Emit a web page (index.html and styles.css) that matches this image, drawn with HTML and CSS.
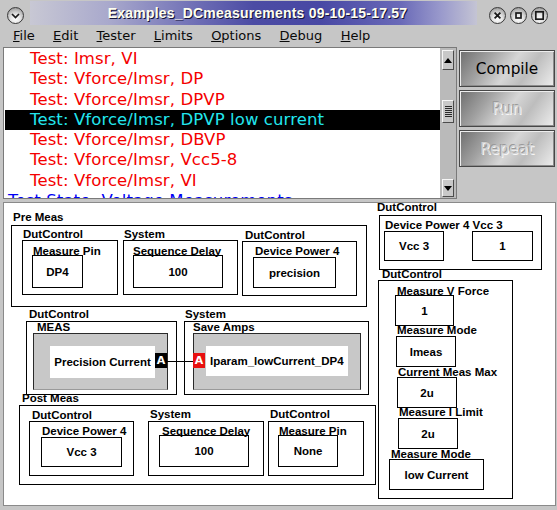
FILE: index.html
```html
<!DOCTYPE html>
<html>
<head>
<meta charset="utf-8">
<link rel="stylesheet" href="styles.css">
</head>
<body>
<div class="titlebar">
  <span class="wbtn wbtn-menu"><svg width="15" height="15" viewBox="0 0 15 15"><polyline points="4,6 7.5,9.5 11,6" fill="none" stroke="#1a1a1a" stroke-width="1.7"/></svg></span>
  <div class="band"><span class="title">Examples_DCmeasurements 09-10-15-17.57</span></div>
  <div class="wctrls">
    <span class="wbtn"><svg width="15" height="15" viewBox="0 0 15 15"><path d="M4.6 4.6 L10.4 10.4 M10.4 4.6 L4.6 10.4" stroke="#1a1a1a" stroke-width="1.8"/></svg></span>
    <span class="wbtn"><svg width="15" height="15" viewBox="0 0 15 15"><rect x="5" y="5" width="5" height="5" fill="none" stroke="#1a1a1a" stroke-width="1.7"/></svg></span>
    <span class="wbtn"><svg width="15" height="15" viewBox="0 0 15 15"><rect x="3.8" y="3.8" width="7.4" height="7.4" fill="none" stroke="#1a1a1a" stroke-width="1.7"/></svg></span>
  </div>
</div>
<div class="menubar">
  <span class="mi"><u>F</u>ile</span>
  <span class="mi"><u>E</u>dit</span>
  <span class="mi"><u>T</u>ester</span>
  <span class="mi"><u>L</u>imits</span>
  <span class="mi"><u>O</u>ptions</span>
  <span class="mi"><u>D</u>ebug</span>
  <span class="mi"><u>H</u>elp</span>
</div>
<div class="top">
  <div class="listframe">
    <div class="list">
      <div class="row red">Test: Imsr, VI</div>
      <div class="row red">Test: Vforce/Imsr, DP</div>
      <div class="row red">Test: Vforce/Imsr, DPVP</div>
      <div class="row sel">Test: Vforce/Imsr, DPVP low current</div>
      <div class="row red">Test: Vforce/Imsr, DBVP</div>
      <div class="row red">Test: Vforce/Imsr, Vcc5-8</div>
      <div class="row red">Test: Vforce/Imsr, VI</div>
      <div class="row blue">Test State: Voltage Measurements</div>
    </div>
    <div class="scrollbar">
      <div class="sbtn up"><span class="tri-up"></span></div>
      <div class="sbtn thumb"><span class="grip"></span></div>
      <div class="sbtn down"><span class="tri-down"></span></div>
    </div>
  </div>
  <div class="btncol">
    <div class="pbtn">Compile</div>
    <div class="pbtn dis">Run</div>
    <div class="pbtn dis">Repeat</div>
  </div>
</div>
<div class="canvas">
  <div class="box b1"></div>
  <div class="box b2"></div>
  <div class="box val b3">DP4</div>
  <div class="box b4"></div>
  <div class="box val b5">100</div>
  <div class="box b6"></div>
  <div class="box val b7">precision</div>

  <div class="box b8"></div>
  <div class="box val b9">Vcc 3</div>
  <div class="box val b10">1</div>

  <div class="box b11"></div>
  <div class="box val b12">1</div>
  <div class="box val b13">Imeas</div>
  <div class="box val b14">2u</div>
  <div class="box val b15">2u</div>
  <div class="box val b16">low Current</div>

  <div class="box b17"></div>
  <div class="gray g1"></div>
  <div class="white w1">Precision Current</div>
  <div class="badge a1">A</div>
  <div class="wire"></div>
  <div class="box b18"></div>
  <div class="gray g2"></div>
  <div class="white w2">Iparam_lowCurrent_DP4</div>
  <div class="badge a2">A</div>

  <div class="box b19"></div>
  <div class="box b20"></div>
  <div class="box val b21">Vcc 3</div>
  <div class="box b22"></div>
  <div class="box val b23">100</div>
  <div class="box b24"></div>
  <div class="box val b25">None</div>

  <span class="lbl l1">Pre Meas</span>
  <span class="lbl l2">DutControl</span>
  <span class="lbl l3">Measure Pin</span>
  <span class="lbl l4">System</span>
  <span class="lbl l5">Sequence Delay</span>
  <span class="lbl l6">DutControl</span>
  <span class="lbl l7">Device Power 4</span>
  <span class="lbl l8">DutControl</span>
  <span class="lbl l9">Device Power 4 Vcc 3</span>
  <span class="lbl l10">DutControl</span>
  <span class="lbl l11">Measure V Force</span>
  <span class="lbl l12">Measure Mode</span>
  <span class="lbl l13">Current Meas Max</span>
  <span class="lbl l14">Measure I Limit</span>
  <span class="lbl l15">Measure Mode</span>
  <span class="lbl l16">DutControl</span>
  <span class="lbl l17">MEAS</span>
  <span class="lbl l18">System</span>
  <span class="lbl l19">Save Amps</span>
  <span class="lbl l20">Post Meas</span>
  <span class="lbl l21">DutControl</span>
  <span class="lbl l22">Device Power 4</span>
  <span class="lbl l23">System</span>
  <span class="lbl l24">Sequence Delay</span>
  <span class="lbl l25">DutControl</span>
  <span class="lbl l26">Measure Pin</span>
</div>
</body>
</html>
```
FILE: styles.css
```css
html, body { margin: 0; padding: 0; }
body {
  width: 557px; height: 510px; overflow: hidden;
  background: #c6c6c6;
  font-family: "DejaVu Sans", sans-serif;
  color: #000;
}

/* title bar */
.titlebar { display: flex; height: 25px; align-items: flex-start; }
.wbtn {
  width: 17px; height: 17px; flex: none; box-sizing: border-box;
  border-radius: 50%; border: 1px solid #3a3a3a;
  background: radial-gradient(circle at 50% 72%, #ffffff 0%, #e6e6e6 35%, #ababab 75%, #6c6c6c 100%);
  display: flex; align-items: center; justify-content: center;
  margin-top: 7px;
}
.wbtn svg { display: block; }
.wbtn-menu { margin-left: 7px; }
.band {
  margin-left: 6px; margin-top: 1px; width: 447px; height: 24px; flex: none;
  box-sizing: border-box; padding-left: 8px;
  background: linear-gradient(to right, #c8c8d4 0%, #a8a8cc 18%, #6c6cb4 38%, #4c4ca4 50%, #4848a4 65%, #6a6ab8 83%, #9a9acc 92%, #c4c4d4 100%);
  display: flex; align-items: center; justify-content: center;
}
.title {
  font: bold 14px "Liberation Sans", sans-serif;
  color: #fffff0; white-space: nowrap; letter-spacing: 0.2px;
  text-shadow: 1px 1px 0 #14143a;
}
.wctrls { display: flex; gap: 4px; margin-left: 12px; }

/* menu */
.menubar {
  display: flex; gap: 18.3px; height: 21px; line-height: 21px;
  padding-left: 13px; font-size: 13px; color: #0a0a0a;
}
.mi { white-space: nowrap; }

/* top panel */
.top { display: flex; height: 154px; box-sizing: border-box; padding-top: 1px; }
.listframe {
  margin-left: 3px; width: 454px; height: 152px; box-sizing: border-box;
  border: 1px solid #7a7a7a; background: #fff; display: flex;
}
.list {
  width: 436px; height: 150px; box-sizing: border-box;
  padding: 1px 0 0 1px; overflow: hidden;
}
.row {
  height: 20.3px; line-height: 20.3px; font-size: 16.5px; letter-spacing: 0.1px;
  white-space: nowrap; padding-left: 25px;
}
.red { color: #f40000; }
.sel { background: #000; color: #22e6ee; }
.blue { color: #0000f4; padding-left: 3px; }

.scrollbar {
  width: 16px; background: #bababa;
  display: flex; flex-direction: column; align-items: center;
}
.sbtn {
  width: 12px; box-sizing: border-box; background: #c8c8c8;
  border: 1px solid; border-color: #f6f6f6 #4c4c4c #4c4c4c #f6f6f6;
  display: flex; align-items: center; justify-content: center;
}
.up { height: 20px; margin-top: 2px; }
.thumb { height: 23px; margin-top: 30px; }
.down { height: 18px; margin-top: auto; margin-bottom: 1px; }
.tri-up { width: 0; height: 0; border-left: 4px solid transparent; border-right: 4px solid transparent; border-bottom: 5px solid #000; }
.tri-down { width: 0; height: 0; border-left: 4px solid transparent; border-right: 4px solid transparent; border-top: 5px solid #000; }
.grip {
  width: 7px; height: 12px;
  background: repeating-linear-gradient(to bottom, #2a2a2a 0 1px, transparent 1px 2px);
}

.btncol {
  margin-left: 2px; width: 96px;
  display: flex; flex-direction: column; gap: 3px; padding-top: 3px;
}
.pbtn {
  height: 37px; box-sizing: border-box;
  border: 1px solid #474747;
  box-shadow: inset 1px 1px 0 #eeeeee, inset -1px -1px 0 #8c8c8c;
  background: linear-gradient(125deg, #6e6e6e 0%, #a2a2a2 28%, #d6d6d6 52%, #bdbdbd 70%, #eeeeee 100%);
  display: flex; align-items: center; justify-content: center;
  font-size: 15.3px; color: #000;
}
.dis { color: #d0d0d0; text-shadow: -1px -1px 0 #9a9a9a, 1px 1px 0 #f6f6f6; }

/* diagram canvas */
.canvas {
  position: relative; margin: 2px 0 0 3px;
  width: 553px; height: 304px; box-sizing: border-box;
  border: 1px solid #8a8a8a; background: #fff;
  font: bold 11.5px/12px "Liberation Sans", sans-serif; color: #000;
}
.lbl { position: absolute; white-space: nowrap; }
.box { position: absolute; box-sizing: border-box; border: 1px solid #000; }
.val { display: flex; align-items: center; justify-content: center; white-space: nowrap; }
.gray {
  position: absolute; box-sizing: border-box; background: #c8c8c8;
  border: 1px solid #2a2a2a; border-bottom-color: #9a9a9a;
}
.white { position: absolute; background: #fff; display: flex; align-items: center; white-space: nowrap; }
.w1 { justify-content: center; }
.w2 { padding-left: 4px; box-sizing: border-box; }
.badge {
  position: absolute; display: flex; align-items: center; justify-content: center;
  color: #fff; font: bold 11px "DejaVu Sans", sans-serif;
}
.a1 { background: #000; }
.a2 { background: #e81010; }
.wire { position: absolute; height: 1px; background: #000; left: 163px; top: 158px; width: 26px; }

.b1 { left: 7px; top: 22px; width: 356px; height: 82px; }
.b2 { left: 18px; top: 37px; width: 96px; height: 55px; }
.b3 { left: 28px; top: 52px; width: 51px; height: 33px; }
.b4 { left: 119px; top: 37px; width: 115px; height: 55px; }
.b5 { left: 129px; top: 52px; width: 90px; height: 33px; }
.b6 { left: 238px; top: 38px; width: 115px; height: 55px; }
.b7 { left: 249px; top: 54px; width: 83px; height: 31px; }
.b8 { left: 375px; top: 12px; width: 163px; height: 55px; }
.b9 { left: 380px; top: 28px; width: 60px; height: 30px; }
.b10 { left: 468px; top: 28px; width: 61px; height: 30px; }
.b11 { left: 374px; top: 77px; width: 135px; height: 219px; }
.b12 { left: 391px; top: 92px; width: 59px; height: 31px; }
.b13 { left: 392px; top: 133px; width: 60px; height: 31px; }
.b14 { left: 393px; top: 174px; width: 60px; height: 31px; }
.b15 { left: 394px; top: 215px; width: 60px; height: 31px; }
.b16 { left: 385px; top: 256px; width: 95px; height: 31px; }
.b17 { left: 22px; top: 118px; width: 151px; height: 74px; }
.b18 { left: 180px; top: 118px; width: 185px; height: 74px; }
.b19 { left: 15px; top: 202px; width: 357px; height: 80px; }
.b20 { left: 25px; top: 218px; width: 105px; height: 55px; }
.b21 { left: 37px; top: 234px; width: 81px; height: 30px; }
.b22 { left: 144px; top: 218px; width: 116px; height: 55px; }
.b23 { left: 155px; top: 232px; width: 90px; height: 32px; }
.b24 { left: 264px; top: 218px; width: 96px; height: 55px; }
.b25 { left: 274px; top: 232px; width: 60px; height: 32px; }

.g1 { left: 29px; top: 130px; width: 135px; height: 57px; }
.g2 { left: 189px; top: 130px; width: 168px; height: 57px; }
.w1 { left: 46px; top: 143px; width: 105px; height: 32px; }
.w2 { left: 202px; top: 143px; width: 142px; height: 30px; }
.a1 { left: 151px; top: 150px; width: 12px; height: 15px; }
.a2 { left: 189px; top: 150px; width: 12px; height: 15px; }

.l1 { left: 9px; top: 8px; }
.l2 { left: 19px; top: 25px; }
.l3 { left: 29px; top: 42px; }
.l4 { left: 120px; top: 25px; }
.l5 { left: 129px; top: 42px; }
.l6 { left: 241px; top: 26px; }
.l7 { left: 251px; top: 42px; }
.l8 { left: 373px; top: -2px; }
.l9 { left: 381px; top: 16px; }
.l10 { left: 378px; top: 65px; }
.l11 { left: 393px; top: 82px; }
.l12 { left: 393px; top: 121px; }
.l13 { left: 394px; top: 163px; }
.l14 { left: 395px; top: 203px; }
.l15 { left: 387px; top: 245px; }
.l16 { left: 25px; top: 105px; }
.l17 { left: 33px; top: 118px; }
.l18 { left: 181px; top: 105px; }
.l19 { left: 189px; top: 118px; }
.l20 { left: 18px; top: 189px; }
.l21 { left: 28px; top: 206px; }
.l22 { left: 38px; top: 222px; }
.l23 { left: 146px; top: 205px; }
.l24 { left: 158px; top: 222px; }
.l25 { left: 266px; top: 205px; }
.l26 { left: 275px; top: 222px; }
```
